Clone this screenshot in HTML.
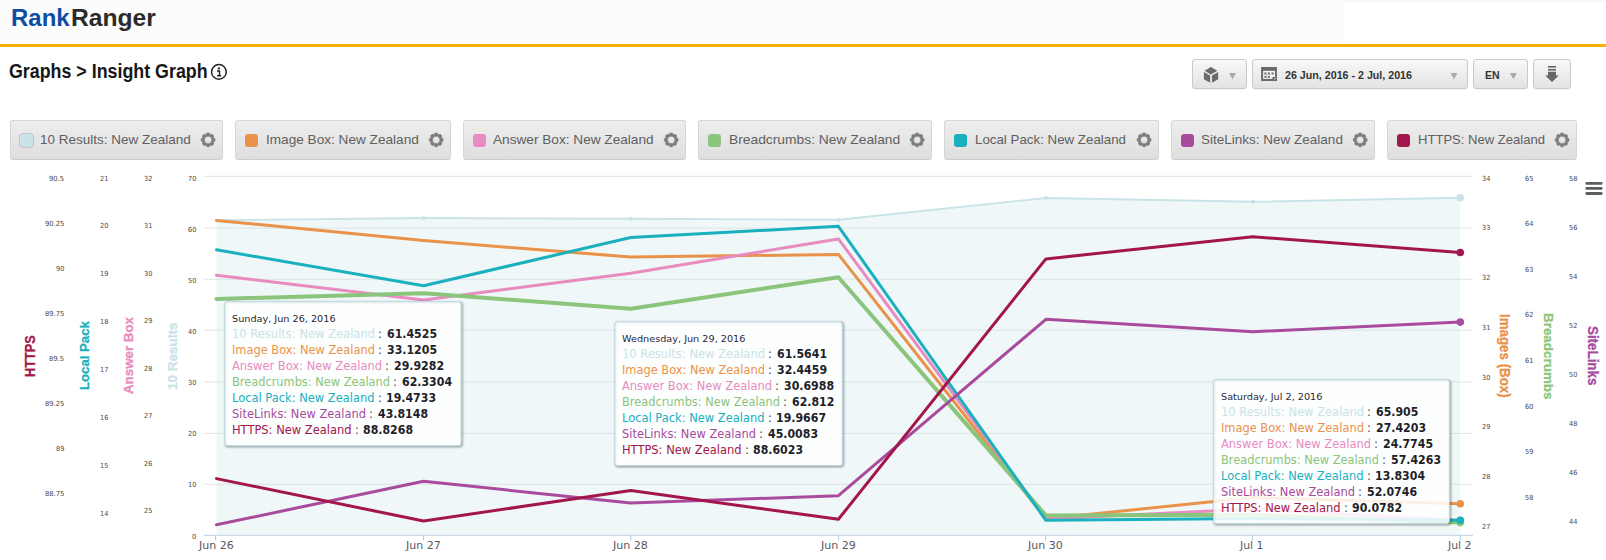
<!DOCTYPE html>
<html lang="en"><head><meta charset="utf-8"><title>Rank Ranger - Insight Graph</title>
<style>
html,body{margin:0;padding:0;background:#fff;}
body{width:1606px;height:560px;position:relative;overflow:hidden;font-family:"Liberation Sans",sans-serif;}
.t{position:absolute;white-space:nowrap;line-height:1;transform-origin:0 0;display:block;}
.hdr{position:absolute;left:0;top:0;width:1345px;height:44px;background:#fcfcfc;}
.hdr2{position:absolute;left:1345px;top:0;width:261px;height:44px;background:#fff;border-top:2px solid #f7f7f7;box-sizing:border-box;}
.gold{position:absolute;left:0;top:44px;width:1606px;height:3px;background:#fbb004;}
.btn{position:absolute;box-sizing:border-box;border:1px solid #c9c9c9;border-radius:3px;background:linear-gradient(#f8f8f8,#e3e3e3);box-shadow:0 1px 0 rgba(0,0,0,0.04);}
.lg{position:absolute;box-sizing:border-box;border:1px solid #d6d6d6;border-bottom-color:#cdcdcd;border-radius:3px;background:linear-gradient(#eeeeee,#dedede);top:120px;height:40px;}
.sw{position:absolute;top:12.6px;left:8.7px;width:13.4px;height:13.4px;border-radius:3.2px;box-sizing:border-box;}
svg{position:absolute;left:0;top:0;}
</style></head><body>
<div class="hdr"></div><div class="hdr2"></div><div class="gold"></div>

<div class="btn" style="left:1192px;top:59px;width:55px;height:30px"></div>
<div class="btn" style="left:1252px;top:59px;width:216px;height:30px"></div>
<div class="btn" style="left:1473px;top:59px;width:55px;height:30px"></div>
<div class="btn" style="left:1533px;top:59px;width:38px;height:30px"></div>
<div class="lg" style="left:10.2px;width:212.5px"><span class="sw" style="background:#c9e3e8;box-shadow:0 0 0 0.8px #bdbdbd"></span></div>
<div class="lg" style="left:235.0px;width:215.8px"><span class="sw" style="background:#ea9249"></span></div>
<div class="lg" style="left:463.1px;width:222.7px"><span class="sw" style="background:#e88bc1"></span></div>
<div class="lg" style="left:698.1px;width:233.7px"><span class="sw" style="background:#8bc57b"></span></div>
<div class="lg" style="left:944.1px;width:214.6px"><span class="sw" style="background:#1ab0be"></span></div>
<div class="lg" style="left:1171.1px;width:203.7px"><span class="sw" style="background:#a94b9d"></span></div>
<div class="lg" style="left:1387.1px;width:189.6px"><span class="sw" style="background:#a3164b"></span></div>
<svg width="1606" height="560" viewBox="0 0 1606 560">
<path d="M204 176.3H1473" stroke="#e3e3e3" stroke-width="1" fill="none"/>
<path d="M204 228.1H1473" stroke="#e3e3e3" stroke-width="1" fill="none"/>
<path d="M204 279.3H1473" stroke="#e3e3e3" stroke-width="1" fill="none"/>
<path d="M204 330.2H1473" stroke="#e3e3e3" stroke-width="1" fill="none"/>
<path d="M204 382.0H1473" stroke="#e3e3e3" stroke-width="1" fill="none"/>
<path d="M204 433.4H1473" stroke="#e3e3e3" stroke-width="1" fill="none"/>
<path d="M204 484.3H1473" stroke="#e3e3e3" stroke-width="1" fill="none"/>
<polygon points="216.5,220.3 423.6,218.0 630.8,218.8 838.4,219.7 1045.9,198.0 1252.8,201.8 1460.3,197.8 1460.3,535.3 216.5,535.3" fill="#c9e3e8" fill-opacity="0.30"/>
<path d="M204 535.3H1473" stroke="#c0cfe0" stroke-width="1" fill="none"/>
<path d="M215.6 535.3V540.5" stroke="#bccbdf" stroke-width="1.1" fill="none"/>
<path d="M423.5 535.3V540.5" stroke="#bccbdf" stroke-width="1.1" fill="none"/>
<path d="M630.7 535.3V540.5" stroke="#bccbdf" stroke-width="1.1" fill="none"/>
<path d="M838.5 535.3V540.5" stroke="#bccbdf" stroke-width="1.1" fill="none"/>
<path d="M1045.6 535.3V540.5" stroke="#bccbdf" stroke-width="1.1" fill="none"/>
<path d="M1252.5 535.3V540.5" stroke="#bccbdf" stroke-width="1.1" fill="none"/>
<path d="M1460.3 535.3V540.5" stroke="#bccbdf" stroke-width="1.1" fill="none"/>
<polyline points="216.5,220.3 423.6,218.0 630.8,218.8 838.4,219.7 1045.9,198.0 1252.8,201.8 1460.3,197.8" fill="none" stroke="#c9e3e8" stroke-width="1.9" stroke-linejoin="round" stroke-linecap="round"/>
<circle cx="423.6" cy="218.0" r="2" fill="#c9e3e8"/>
<circle cx="630.8" cy="218.8" r="2" fill="#c9e3e8"/>
<circle cx="838.4" cy="219.7" r="2" fill="#c9e3e8"/>
<circle cx="1045.9" cy="198.0" r="2" fill="#c9e3e8"/>
<circle cx="1252.8" cy="201.8" r="2" fill="#c9e3e8"/>
<circle cx="1460.3" cy="197.8" r="2" fill="#c9e3e8"/>
<circle cx="1460.3" cy="197.8" r="3.8" fill="#c9e3e8"/>
<polyline points="216.5,220.4 423.6,240.5 630.8,257.1 838.4,254.4 1045.9,518.8 1252.8,497.6 1460.3,503.8" fill="none" stroke="#ea9249" stroke-width="3.0" stroke-linejoin="round" stroke-linecap="round"/>
<circle cx="1460.3" cy="503.8" r="3.8" fill="#ea9249"/>
<polyline points="216.5,275.3 423.6,300.0 630.8,273.2 838.4,238.9 1045.9,519.0 1252.8,509.0 1460.3,520.5" fill="none" stroke="#e88bc1" stroke-width="3.0" stroke-linejoin="round" stroke-linecap="round"/>
<circle cx="1460.3" cy="520.5" r="3.8" fill="#e88bc1"/>
<polyline points="216.5,298.9 423.6,293.3 630.8,308.8 838.4,277.2 1045.9,515.4 1252.8,514.8 1460.3,522.6" fill="none" stroke="#8bc57b" stroke-width="4.0" stroke-linejoin="round" stroke-linecap="round"/>
<circle cx="1460.3" cy="522.6" r="3.8" fill="#8bc57b"/>
<polyline points="216.5,249.8 423.6,285.8 630.8,237.5 838.4,226.3 1045.9,520.3 1252.8,518.6 1460.3,520.3" fill="none" stroke="#1ab0be" stroke-width="3.0" stroke-linejoin="round" stroke-linecap="round"/>
<circle cx="1460.3" cy="520.3" r="3.8" fill="#1ab0be"/>
<polyline points="216.5,524.8 423.6,481.3 630.8,503.0 838.4,495.7 1045.9,319.3 1252.8,331.7 1460.3,322.1" fill="none" stroke="#a94b9d" stroke-width="3.0" stroke-linejoin="round" stroke-linecap="round"/>
<circle cx="1460.3" cy="322.1" r="3.8" fill="#a94b9d"/>
<polyline points="216.5,478.6 423.6,521.0 630.8,490.6 838.4,519.3 1045.9,258.9 1252.8,236.7 1460.3,252.5" fill="none" stroke="#a3164b" stroke-width="3.0" stroke-linejoin="round" stroke-linecap="round"/>
<circle cx="1460.3" cy="252.5" r="3.8" fill="#a3164b"/>
</svg>
<svg width="1606" height="560" viewBox="0 0 1606 560">
<rect x="225.9" y="302.8" width="236.1" height="143.8" rx="2.5" fill="none" stroke="#000" stroke-opacity="0.05" stroke-width="5"/>
<rect x="225.9" y="302.8" width="236.1" height="143.8" rx="2.5" fill="none" stroke="#000" stroke-opacity="0.10" stroke-width="3"/>
<rect x="225.9" y="302.8" width="236.1" height="143.8" rx="2.5" fill="none" stroke="#000" stroke-opacity="0.15" stroke-width="1"/>
<rect x="224.9" y="301.8" width="236.1" height="143.8" rx="2.5" fill="#ffffff" fill-opacity="0.86" stroke="#bddbe1" stroke-width="1"/>
<rect x="615.9" y="322.8" width="227.3" height="143.7" rx="2.5" fill="none" stroke="#000" stroke-opacity="0.05" stroke-width="5"/>
<rect x="615.9" y="322.8" width="227.3" height="143.7" rx="2.5" fill="none" stroke="#000" stroke-opacity="0.10" stroke-width="3"/>
<rect x="615.9" y="322.8" width="227.3" height="143.7" rx="2.5" fill="none" stroke="#000" stroke-opacity="0.15" stroke-width="1"/>
<rect x="614.9" y="321.8" width="227.3" height="143.7" rx="2.5" fill="#ffffff" fill-opacity="0.86" stroke="#bddbe1" stroke-width="1"/>
<rect x="1214.6" y="380.8" width="235.7" height="143.6" rx="2.5" fill="none" stroke="#000" stroke-opacity="0.05" stroke-width="5"/>
<rect x="1214.6" y="380.8" width="235.7" height="143.6" rx="2.5" fill="none" stroke="#000" stroke-opacity="0.10" stroke-width="3"/>
<rect x="1214.6" y="380.8" width="235.7" height="143.6" rx="2.5" fill="none" stroke="#000" stroke-opacity="0.15" stroke-width="1"/>
<rect x="1213.6" y="379.8" width="235.7" height="143.6" rx="2.5" fill="#ffffff" fill-opacity="0.86" stroke="#bddbe1" stroke-width="1"/>
</svg>
<svg width="1606" height="560" viewBox="0 0 1606 560">
<circle cx="218.9" cy="71.9" r="7.35" fill="none" stroke="#222" stroke-width="1.45"/>
<path d="M217.0 71h2.5v4.6M217.0 75.7h4.2" stroke="#222" stroke-width="1.45" fill="none"/><circle cx="218.9" cy="68.4" r="1.15" fill="#222"/>
<rect x="1585.4" y="182.0" width="17.2" height="2.8" rx="1.3" fill="#5e5e5e"/>
<rect x="1585.4" y="187.0" width="17.2" height="2.8" rx="1.3" fill="#5e5e5e"/>
<rect x="1585.4" y="192.1" width="17.2" height="2.8" rx="1.3" fill="#5e5e5e"/>
<path d="M1229.0 73.1H1236.0L1232.5 79.2Z" fill="#a9a9a9"/>
<path d="M1450.5 73.1H1457.5L1454.0 79.2Z" fill="#a9a9a9"/>
<path d="M1509.9 73.1H1516.9L1513.4 79.2Z" fill="#a9a9a9"/>
<g fill="#6b6b6b"><path d="M1210.9 67.0L1217.3 70.8 1210.9 74.5 1204.6 70.8z"/><path d="M1203.9 72.0L1210.2 75.6V82.8L1203.9 79.3z"/><path d="M1218.2 72.0L1212.0 75.6V82.8L1218.2 79.3z"/></g>
<g><rect x="1261.1" y="67.0" width="15.8" height="14.0" fill="#6a6a6a"/><rect x="1263.1" y="70.8" width="11.9" height="8.1" fill="#f4f4f4"/><g fill="#7a7a7a"><rect x="1264.4" y="72.4" width="2.2" height="2.2"/><rect x="1267.8" y="72.4" width="2.2" height="2.2"/><rect x="1271.5" y="72.4" width="2.2" height="2.2"/><rect x="1264.4" y="75.8" width="2.2" height="2.2"/><rect x="1267.8" y="75.8" width="2.2" height="2.2"/></g><path d="M1272.4 77.0h4.5v4h-4.5z" fill="#6a6a6a"/><path d="M1273.6 79.6l2-2v0.9l-1.1 1.1z" fill="#f4f4f4"/></g>
<g fill="#666"><rect x="1548" y="66" width="8" height="1.6"/><rect x="1548" y="69" width="8" height="1.6"/><path d="M1548 71.8h8v3.6h2.8L1552 81.9l-6.8-6.5h2.8z"/></g>
<path d="M214.97 138.53L214.97 141.27L213.79 141.46L213.22 142.82L213.92 143.79L211.99 145.72L211.02 145.02L209.66 145.59L209.47 146.77L206.73 146.77L206.54 145.59L205.18 145.02L204.21 145.72L202.28 143.79L202.98 142.82L202.41 141.46L201.23 141.27L201.23 138.53L202.41 138.34L202.98 136.98L202.28 136.01L204.21 134.08L205.18 134.78L206.54 134.21L206.73 133.03L209.47 133.03L209.66 134.21L211.02 134.78L211.99 134.08L213.92 136.01L213.22 136.98L213.79 138.34ZM204.40 139.90a3.70 3.70 0 1 0 7.40 0a3.70 3.70 0 1 0 -7.40 0Z" fill="#7c7c7c" fill-rule="evenodd" stroke="#7c7c7c" stroke-width="0.6" stroke-linejoin="round"/>
<path d="M443.07 138.53L443.07 141.27L441.89 141.46L441.32 142.82L442.02 143.79L440.09 145.72L439.12 145.02L437.76 145.59L437.57 146.77L434.83 146.77L434.64 145.59L433.28 145.02L432.31 145.72L430.38 143.79L431.08 142.82L430.51 141.46L429.33 141.27L429.33 138.53L430.51 138.34L431.08 136.98L430.38 136.01L432.31 134.08L433.28 134.78L434.64 134.21L434.83 133.03L437.57 133.03L437.76 134.21L439.12 134.78L440.09 134.08L442.02 136.01L441.32 136.98L441.89 138.34ZM432.50 139.90a3.70 3.70 0 1 0 7.40 0a3.70 3.70 0 1 0 -7.40 0Z" fill="#7c7c7c" fill-rule="evenodd" stroke="#7c7c7c" stroke-width="0.6" stroke-linejoin="round"/>
<path d="M678.07 138.53L678.07 141.27L676.89 141.46L676.32 142.82L677.02 143.79L675.09 145.72L674.12 145.02L672.76 145.59L672.57 146.77L669.83 146.77L669.64 145.59L668.28 145.02L667.31 145.72L665.38 143.79L666.08 142.82L665.51 141.46L664.33 141.27L664.33 138.53L665.51 138.34L666.08 136.98L665.38 136.01L667.31 134.08L668.28 134.78L669.64 134.21L669.83 133.03L672.57 133.03L672.76 134.21L674.12 134.78L675.09 134.08L677.02 136.01L676.32 136.98L676.89 138.34ZM667.50 139.90a3.70 3.70 0 1 0 7.40 0a3.70 3.70 0 1 0 -7.40 0Z" fill="#7c7c7c" fill-rule="evenodd" stroke="#7c7c7c" stroke-width="0.6" stroke-linejoin="round"/>
<path d="M924.07 138.53L924.07 141.27L922.89 141.46L922.32 142.82L923.02 143.79L921.09 145.72L920.12 145.02L918.76 145.59L918.57 146.77L915.83 146.77L915.64 145.59L914.28 145.02L913.31 145.72L911.38 143.79L912.08 142.82L911.51 141.46L910.33 141.27L910.33 138.53L911.51 138.34L912.08 136.98L911.38 136.01L913.31 134.08L914.28 134.78L915.64 134.21L915.83 133.03L918.57 133.03L918.76 134.21L920.12 134.78L921.09 134.08L923.02 136.01L922.32 136.98L922.89 138.34ZM913.50 139.90a3.70 3.70 0 1 0 7.40 0a3.70 3.70 0 1 0 -7.40 0Z" fill="#7c7c7c" fill-rule="evenodd" stroke="#7c7c7c" stroke-width="0.6" stroke-linejoin="round"/>
<path d="M1150.97 138.53L1150.97 141.27L1149.79 141.46L1149.22 142.82L1149.92 143.79L1147.99 145.72L1147.02 145.02L1145.66 145.59L1145.47 146.77L1142.73 146.77L1142.54 145.59L1141.18 145.02L1140.21 145.72L1138.28 143.79L1138.98 142.82L1138.41 141.46L1137.23 141.27L1137.23 138.53L1138.41 138.34L1138.98 136.98L1138.28 136.01L1140.21 134.08L1141.18 134.78L1142.54 134.21L1142.73 133.03L1145.47 133.03L1145.66 134.21L1147.02 134.78L1147.99 134.08L1149.92 136.01L1149.22 136.98L1149.79 138.34ZM1140.40 139.90a3.70 3.70 0 1 0 7.40 0a3.70 3.70 0 1 0 -7.40 0Z" fill="#7c7c7c" fill-rule="evenodd" stroke="#7c7c7c" stroke-width="0.6" stroke-linejoin="round"/>
<path d="M1367.07 138.53L1367.07 141.27L1365.89 141.46L1365.32 142.82L1366.02 143.79L1364.09 145.72L1363.12 145.02L1361.76 145.59L1361.57 146.77L1358.83 146.77L1358.64 145.59L1357.28 145.02L1356.31 145.72L1354.38 143.79L1355.08 142.82L1354.51 141.46L1353.33 141.27L1353.33 138.53L1354.51 138.34L1355.08 136.98L1354.38 136.01L1356.31 134.08L1357.28 134.78L1358.64 134.21L1358.83 133.03L1361.57 133.03L1361.76 134.21L1363.12 134.78L1364.09 134.08L1366.02 136.01L1365.32 136.98L1365.89 138.34ZM1356.50 139.90a3.70 3.70 0 1 0 7.40 0a3.70 3.70 0 1 0 -7.40 0Z" fill="#7c7c7c" fill-rule="evenodd" stroke="#7c7c7c" stroke-width="0.6" stroke-linejoin="round"/>
<path d="M1568.97 138.53L1568.97 141.27L1567.79 141.46L1567.22 142.82L1567.92 143.79L1565.99 145.72L1565.02 145.02L1563.66 145.59L1563.47 146.77L1560.73 146.77L1560.54 145.59L1559.18 145.02L1558.21 145.72L1556.28 143.79L1556.98 142.82L1556.41 141.46L1555.23 141.27L1555.23 138.53L1556.41 138.34L1556.98 136.98L1556.28 136.01L1558.21 134.08L1559.18 134.78L1560.54 134.21L1560.73 133.03L1563.47 133.03L1563.66 134.21L1565.02 134.78L1565.99 134.08L1567.92 136.01L1567.22 136.98L1567.79 138.34ZM1558.40 139.90a3.70 3.70 0 1 0 7.40 0a3.70 3.70 0 1 0 -7.40 0Z" fill="#7c7c7c" fill-rule="evenodd" stroke="#7c7c7c" stroke-width="0.6" stroke-linejoin="round"/>
</svg>
<span class="t" id="t0" style="font:bold 24.5px/1 'Liberation Sans', sans-serif;color:#0c4da2;left:11.40px;top:6.00px;transform:scaleX(0.9779);">Rank</span>
<span class="t" id="t1" style="font:bold 24.5px/1 'Liberation Sans', sans-serif;color:#2b2b2b;left:70.60px;top:6.00px;transform:scaleX(1.0057);">Ranger</span>
<span class="t" id="t2" style="font:bold 20px/1 'Liberation Sans', sans-serif;color:#161616;left:9.00px;top:61.00px;transform:scaleX(0.8913);">Graphs &gt; Insight Graph</span>
<span class="t" id="t3" style="font:bold 11.4px/1 'Liberation Sans', sans-serif;color:#333;left:1284.60px;top:70.00px;transform:scaleX(0.9372);">26 Jun, 2016 - 2 Jul, 2016</span>
<span class="t" id="t4" style="font:bold 11.8px/1 'Liberation Sans', sans-serif;color:#333;left:1484.70px;top:70.00px;transform:scaleX(0.8969);">EN</span>
<span class="t" id="t5" style="font:normal 13px/1 'Liberation Sans', sans-serif;color:#606060;left:40.10px;top:133.00px;transform:scaleX(1.0375);">10 Results: New Zealand</span>
<span class="t" id="t6" style="font:normal 13px/1 'Liberation Sans', sans-serif;color:#606060;left:265.70px;top:133.00px;transform:scaleX(1.0468);">Image Box: New Zealand</span>
<span class="t" id="t7" style="font:normal 13px/1 'Liberation Sans', sans-serif;color:#606060;left:493.00px;top:133.00px;transform:scaleX(1.0484);">Answer Box: New Zealand</span>
<span class="t" id="t8" style="font:normal 13px/1 'Liberation Sans', sans-serif;color:#606060;left:728.80px;top:133.00px;transform:scaleX(1.0624);">Breadcrumbs: New Zealand</span>
<span class="t" id="t9" style="font:normal 13px/1 'Liberation Sans', sans-serif;color:#606060;left:974.80px;top:133.00px;transform:scaleX(1.0243);">Local Pack: New Zealand</span>
<span class="t" id="t10" style="font:normal 13px/1 'Liberation Sans', sans-serif;color:#606060;left:1201.00px;top:133.00px;transform:scaleX(1.0390);">SiteLinks: New Zealand</span>
<span class="t" id="t11" style="font:normal 13px/1 'Liberation Sans', sans-serif;color:#606060;left:1417.80px;top:133.00px;transform:scaleX(1.0044);">HTTPS: New Zealand</span>
<span class="t" id="t12" style="font:normal 7.0px/1 'DejaVu Sans', 'Liberation Sans', sans-serif;color:#474747;left:49.20px;top:176.00px;transform:scaleX(0.9683);">90.5</span>
<span class="t" id="t13" style="font:normal 7.0px/1 'DejaVu Sans', 'Liberation Sans', sans-serif;color:#474747;left:44.90px;top:221.00px;transform:scaleX(0.9677);">90.25</span>
<span class="t" id="t14" style="font:normal 7.0px/1 'DejaVu Sans', 'Liberation Sans', sans-serif;color:#474747;left:56.00px;top:266.00px;transform:scaleX(0.9303);">90</span>
<span class="t" id="t15" style="font:normal 7.0px/1 'DejaVu Sans', 'Liberation Sans', sans-serif;color:#474747;left:44.90px;top:311.00px;transform:scaleX(0.9677);">89.75</span>
<span class="t" id="t16" style="font:normal 7.0px/1 'DejaVu Sans', 'Liberation Sans', sans-serif;color:#474747;left:49.20px;top:356.00px;transform:scaleX(0.9683);">89.5</span>
<span class="t" id="t17" style="font:normal 7.0px/1 'DejaVu Sans', 'Liberation Sans', sans-serif;color:#474747;left:44.90px;top:401.00px;transform:scaleX(0.9677);">89.25</span>
<span class="t" id="t18" style="font:normal 7.0px/1 'DejaVu Sans', 'Liberation Sans', sans-serif;color:#474747;left:56.00px;top:446.00px;transform:scaleX(0.9303);">89</span>
<span class="t" id="t19" style="font:normal 7.0px/1 'DejaVu Sans', 'Liberation Sans', sans-serif;color:#474747;left:44.90px;top:491.00px;transform:scaleX(0.9677);">88.75</span>
<span class="t" id="t20" style="font:normal 7.0px/1 'DejaVu Sans', 'Liberation Sans', sans-serif;color:#474747;left:99.50px;top:176.00px;transform:scaleX(0.9303);">21</span>
<span class="t" id="t21" style="font:normal 7.0px/1 'DejaVu Sans', 'Liberation Sans', sans-serif;color:#474747;left:99.50px;top:223.00px;transform:scaleX(0.9303);">20</span>
<span class="t" id="t22" style="font:normal 7.0px/1 'DejaVu Sans', 'Liberation Sans', sans-serif;color:#474747;left:99.50px;top:271.00px;transform:scaleX(0.9303);">19</span>
<span class="t" id="t23" style="font:normal 7.0px/1 'DejaVu Sans', 'Liberation Sans', sans-serif;color:#474747;left:99.50px;top:319.00px;transform:scaleX(0.9303);">18</span>
<span class="t" id="t24" style="font:normal 7.0px/1 'DejaVu Sans', 'Liberation Sans', sans-serif;color:#474747;left:99.50px;top:367.00px;transform:scaleX(0.9303);">17</span>
<span class="t" id="t25" style="font:normal 7.0px/1 'DejaVu Sans', 'Liberation Sans', sans-serif;color:#474747;left:99.50px;top:415.00px;transform:scaleX(0.9303);">16</span>
<span class="t" id="t26" style="font:normal 7.0px/1 'DejaVu Sans', 'Liberation Sans', sans-serif;color:#474747;left:99.50px;top:463.00px;transform:scaleX(0.9303);">15</span>
<span class="t" id="t27" style="font:normal 7.0px/1 'DejaVu Sans', 'Liberation Sans', sans-serif;color:#474747;left:99.50px;top:511.00px;transform:scaleX(0.9303);">14</span>
<span class="t" id="t28" style="font:normal 7.0px/1 'DejaVu Sans', 'Liberation Sans', sans-serif;color:#474747;left:144.00px;top:176.00px;transform:scaleX(0.9303);">32</span>
<span class="t" id="t29" style="font:normal 7.0px/1 'DejaVu Sans', 'Liberation Sans', sans-serif;color:#474747;left:144.00px;top:223.00px;transform:scaleX(0.9303);">31</span>
<span class="t" id="t30" style="font:normal 7.0px/1 'DejaVu Sans', 'Liberation Sans', sans-serif;color:#474747;left:144.00px;top:271.00px;transform:scaleX(0.9303);">30</span>
<span class="t" id="t31" style="font:normal 7.0px/1 'DejaVu Sans', 'Liberation Sans', sans-serif;color:#474747;left:144.00px;top:318.00px;transform:scaleX(0.9303);">29</span>
<span class="t" id="t32" style="font:normal 7.0px/1 'DejaVu Sans', 'Liberation Sans', sans-serif;color:#474747;left:144.00px;top:366.00px;transform:scaleX(0.9303);">28</span>
<span class="t" id="t33" style="font:normal 7.0px/1 'DejaVu Sans', 'Liberation Sans', sans-serif;color:#474747;left:144.00px;top:413.00px;transform:scaleX(0.9303);">27</span>
<span class="t" id="t34" style="font:normal 7.0px/1 'DejaVu Sans', 'Liberation Sans', sans-serif;color:#474747;left:144.00px;top:461.00px;transform:scaleX(0.9303);">26</span>
<span class="t" id="t35" style="font:normal 7.0px/1 'DejaVu Sans', 'Liberation Sans', sans-serif;color:#474747;left:144.00px;top:508.00px;transform:scaleX(0.9303);">25</span>
<span class="t" id="t36" style="font:normal 7.0px/1 'DejaVu Sans', 'Liberation Sans', sans-serif;color:#474747;left:187.70px;top:176.00px;transform:scaleX(0.9303);">70</span>
<span class="t" id="t37" style="font:normal 7.0px/1 'DejaVu Sans', 'Liberation Sans', sans-serif;color:#474747;left:187.70px;top:227.00px;transform:scaleX(0.9303);">60</span>
<span class="t" id="t38" style="font:normal 7.0px/1 'DejaVu Sans', 'Liberation Sans', sans-serif;color:#474747;left:187.70px;top:278.00px;transform:scaleX(0.9303);">50</span>
<span class="t" id="t39" style="font:normal 7.0px/1 'DejaVu Sans', 'Liberation Sans', sans-serif;color:#474747;left:187.70px;top:329.00px;transform:scaleX(0.9303);">40</span>
<span class="t" id="t40" style="font:normal 7.0px/1 'DejaVu Sans', 'Liberation Sans', sans-serif;color:#474747;left:187.70px;top:380.00px;transform:scaleX(0.9303);">30</span>
<span class="t" id="t41" style="font:normal 7.0px/1 'DejaVu Sans', 'Liberation Sans', sans-serif;color:#474747;left:187.70px;top:431.00px;transform:scaleX(0.9303);">20</span>
<span class="t" id="t42" style="font:normal 7.0px/1 'DejaVu Sans', 'Liberation Sans', sans-serif;color:#474747;left:187.70px;top:482.00px;transform:scaleX(0.9303);">10</span>
<span class="t" id="t43" style="font:normal 7.0px/1 'DejaVu Sans', 'Liberation Sans', sans-serif;color:#474747;left:191.70px;top:534.00px;transform:scaleX(0.9622);">0</span>
<span class="t" id="t44" style="font:normal 7.0px/1 'DejaVu Sans', 'Liberation Sans', sans-serif;color:#474747;left:1481.70px;top:176.00px;transform:scaleX(0.9303);">34</span>
<span class="t" id="t45" style="font:normal 7.0px/1 'DejaVu Sans', 'Liberation Sans', sans-serif;color:#474747;left:1481.70px;top:225.00px;transform:scaleX(0.9303);">33</span>
<span class="t" id="t46" style="font:normal 7.0px/1 'DejaVu Sans', 'Liberation Sans', sans-serif;color:#474747;left:1481.70px;top:275.00px;transform:scaleX(0.9303);">32</span>
<span class="t" id="t47" style="font:normal 7.0px/1 'DejaVu Sans', 'Liberation Sans', sans-serif;color:#474747;left:1481.70px;top:325.00px;transform:scaleX(0.9303);">31</span>
<span class="t" id="t48" style="font:normal 7.0px/1 'DejaVu Sans', 'Liberation Sans', sans-serif;color:#474747;left:1481.70px;top:375.00px;transform:scaleX(0.9303);">30</span>
<span class="t" id="t49" style="font:normal 7.0px/1 'DejaVu Sans', 'Liberation Sans', sans-serif;color:#474747;left:1481.70px;top:424.00px;transform:scaleX(0.9303);">29</span>
<span class="t" id="t50" style="font:normal 7.0px/1 'DejaVu Sans', 'Liberation Sans', sans-serif;color:#474747;left:1481.70px;top:474.00px;transform:scaleX(0.9303);">28</span>
<span class="t" id="t51" style="font:normal 7.0px/1 'DejaVu Sans', 'Liberation Sans', sans-serif;color:#474747;left:1481.70px;top:524.00px;transform:scaleX(0.9303);">27</span>
<span class="t" id="t52" style="font:normal 7.0px/1 'DejaVu Sans', 'Liberation Sans', sans-serif;color:#474747;left:1525.10px;top:176.00px;transform:scaleX(0.9303);">65</span>
<span class="t" id="t53" style="font:normal 7.0px/1 'DejaVu Sans', 'Liberation Sans', sans-serif;color:#474747;left:1525.10px;top:221.00px;transform:scaleX(0.9303);">64</span>
<span class="t" id="t54" style="font:normal 7.0px/1 'DejaVu Sans', 'Liberation Sans', sans-serif;color:#474747;left:1525.10px;top:267.00px;transform:scaleX(0.9303);">63</span>
<span class="t" id="t55" style="font:normal 7.0px/1 'DejaVu Sans', 'Liberation Sans', sans-serif;color:#474747;left:1525.10px;top:312.00px;transform:scaleX(0.9303);">62</span>
<span class="t" id="t56" style="font:normal 7.0px/1 'DejaVu Sans', 'Liberation Sans', sans-serif;color:#474747;left:1525.10px;top:358.00px;transform:scaleX(0.9303);">61</span>
<span class="t" id="t57" style="font:normal 7.0px/1 'DejaVu Sans', 'Liberation Sans', sans-serif;color:#474747;left:1525.10px;top:404.00px;transform:scaleX(0.9303);">60</span>
<span class="t" id="t58" style="font:normal 7.0px/1 'DejaVu Sans', 'Liberation Sans', sans-serif;color:#474747;left:1525.10px;top:449.00px;transform:scaleX(0.9303);">59</span>
<span class="t" id="t59" style="font:normal 7.0px/1 'DejaVu Sans', 'Liberation Sans', sans-serif;color:#474747;left:1525.10px;top:495.00px;transform:scaleX(0.9303);">58</span>
<span class="t" id="t60" style="font:normal 7.0px/1 'DejaVu Sans', 'Liberation Sans', sans-serif;color:#474747;left:1569.40px;top:176.00px;transform:scaleX(0.9303);">58</span>
<span class="t" id="t61" style="font:normal 7.0px/1 'DejaVu Sans', 'Liberation Sans', sans-serif;color:#474747;left:1569.40px;top:225.00px;transform:scaleX(0.9303);">56</span>
<span class="t" id="t62" style="font:normal 7.0px/1 'DejaVu Sans', 'Liberation Sans', sans-serif;color:#474747;left:1569.40px;top:274.00px;transform:scaleX(0.9303);">54</span>
<span class="t" id="t63" style="font:normal 7.0px/1 'DejaVu Sans', 'Liberation Sans', sans-serif;color:#474747;left:1569.40px;top:323.00px;transform:scaleX(0.9303);">52</span>
<span class="t" id="t64" style="font:normal 7.0px/1 'DejaVu Sans', 'Liberation Sans', sans-serif;color:#474747;left:1569.40px;top:372.00px;transform:scaleX(0.9303);">50</span>
<span class="t" id="t65" style="font:normal 7.0px/1 'DejaVu Sans', 'Liberation Sans', sans-serif;color:#474747;left:1569.40px;top:421.00px;transform:scaleX(0.9303);">48</span>
<span class="t" id="t66" style="font:normal 7.0px/1 'DejaVu Sans', 'Liberation Sans', sans-serif;color:#474747;left:1569.40px;top:470.00px;transform:scaleX(0.9303);">46</span>
<span class="t" id="t67" style="font:normal 7.0px/1 'DejaVu Sans', 'Liberation Sans', sans-serif;color:#474747;left:1569.40px;top:519.00px;transform:scaleX(0.9303);">44</span>
<span class="t" id="t68" style="font:normal 11px/1 'DejaVu Sans Condensed', 'DejaVu Sans', 'Liberation Sans', sans-serif;color:#56595f;left:198.85px;top:540.00px;transform:scaleX(1.1153);">Jun 26</span>
<span class="t" id="t69" style="font:normal 11px/1 'DejaVu Sans Condensed', 'DejaVu Sans', 'Liberation Sans', sans-serif;color:#56595f;left:405.95px;top:540.00px;transform:scaleX(1.1153);">Jun 27</span>
<span class="t" id="t70" style="font:normal 11px/1 'DejaVu Sans Condensed', 'DejaVu Sans', 'Liberation Sans', sans-serif;color:#56595f;left:613.15px;top:540.00px;transform:scaleX(1.1153);">Jun 28</span>
<span class="t" id="t71" style="font:normal 11px/1 'DejaVu Sans Condensed', 'DejaVu Sans', 'Liberation Sans', sans-serif;color:#56595f;left:820.75px;top:540.00px;transform:scaleX(1.1153);">Jun 29</span>
<span class="t" id="t72" style="font:normal 11px/1 'DejaVu Sans Condensed', 'DejaVu Sans', 'Liberation Sans', sans-serif;color:#56595f;left:1028.25px;top:540.00px;transform:scaleX(1.1153);">Jun 30</span>
<span class="t" id="t73" style="font:normal 11px/1 'DejaVu Sans Condensed', 'DejaVu Sans', 'Liberation Sans', sans-serif;color:#56595f;left:1240.00px;top:540.00px;transform:scaleX(1.0986);">Jul 1</span>
<span class="t" id="t74" style="font:normal 11px/1 'DejaVu Sans Condensed', 'DejaVu Sans', 'Liberation Sans', sans-serif;color:#56595f;left:1448.30px;top:540.00px;transform:scaleX(1.0986);">Jul 2</span>
<span class="t" id="t75" style="font:bold 14.0px/1 'Liberation Sans', sans-serif;color:#a3164b;left:23.00px;top:377.00px;transform:rotate(-90deg) scaleX(0.9065);-webkit-text-stroke:0.3px currentColor;">HTTPS</span>
<span class="t" id="t76" style="font:bold 13.6px/1 'Liberation Sans', sans-serif;color:#1ab0be;left:78.30px;top:390.00px;transform:rotate(-90deg) scaleX(0.9686);-webkit-text-stroke:0.3px currentColor;">Local Pack</span>
<span class="t" id="t77" style="font:bold 13.6px/1 'Liberation Sans', sans-serif;color:#e88bc1;left:122.10px;top:394.30px;transform:rotate(-90deg) scaleX(0.9801);-webkit-text-stroke:0.3px currentColor;">Answer Box</span>
<span class="t" id="t78" style="font:bold 13.6px/1 'Liberation Sans', sans-serif;color:#c9e3e8;left:166.30px;top:390.00px;transform:rotate(-90deg) scaleX(0.9909);-webkit-text-stroke:0.3px currentColor;">10 Results</span>
<span class="t" id="t79" style="font:bold 13.8px/1 'Liberation Sans', sans-serif;color:#ea9249;left:1510.80px;top:314.20px;transform:rotate(90deg) scaleX(0.9661);-webkit-text-stroke:0.3px currentColor;">Images (Box)</span>
<span class="t" id="t80" style="font:bold 13.6px/1 'Liberation Sans', sans-serif;color:#8bc57b;left:1555.00px;top:312.80px;transform:rotate(90deg) scaleX(0.9870);-webkit-text-stroke:0.3px currentColor;">Breadcrumbs</span>
<span class="t" id="t81" style="font:bold 13.8px/1 'Liberation Sans', sans-serif;color:#a94b9d;left:1598.80px;top:326.10px;transform:rotate(90deg) scaleX(0.9683);-webkit-text-stroke:0.3px currentColor;">SiteLinks</span>
<span class="t" id="t82" style="font:normal 9.3px/1 'DejaVu Sans', 'Liberation Sans', sans-serif;color:#2a2535;left:232.00px;top:314.00px;transform:scaleX(1.0402);">Sunday, Jun 26, 2016</span>
<span class="t" id="t83" style="font:normal 11.7px/1 'DejaVu Sans', 'Liberation Sans', sans-serif;color:#c9e3e8;left:232.00px;top:329.00px;transform:scaleX(0.9845);">10 Results: New Zealand</span>
<span class="t" id="t84" style="font:normal 11.7px/1 'DejaVu Sans', 'Liberation Sans', sans-serif;color:#4a4a55;left:378.10px;top:329.00px;transform:scaleX(1.0119);">:</span>
<span class="t" id="t85" style="font:bold 11.7px/1 'DejaVu Sans', 'Liberation Sans', sans-serif;color:#1f1f2a;left:386.60px;top:329.00px;transform:scaleX(0.9396);">61.4525</span>
<span class="t" id="t86" style="font:normal 11.7px/1 'DejaVu Sans', 'Liberation Sans', sans-serif;color:#ea9249;left:232.00px;top:345.00px;transform:scaleX(0.9761);">Image Box: New Zealand</span>
<span class="t" id="t87" style="font:normal 11.7px/1 'DejaVu Sans', 'Liberation Sans', sans-serif;color:#4a4a55;left:378.10px;top:345.00px;transform:scaleX(1.0119);">:</span>
<span class="t" id="t88" style="font:bold 11.7px/1 'DejaVu Sans', 'Liberation Sans', sans-serif;color:#1f1f2a;left:386.60px;top:345.00px;transform:scaleX(0.9396);">33.1205</span>
<span class="t" id="t89" style="font:normal 11.7px/1 'DejaVu Sans', 'Liberation Sans', sans-serif;color:#e88bc1;left:232.00px;top:361.00px;transform:scaleX(0.9807);">Answer Box: New Zealand</span>
<span class="t" id="t90" style="font:normal 11.7px/1 'DejaVu Sans', 'Liberation Sans', sans-serif;color:#4a4a55;left:385.10px;top:361.00px;transform:scaleX(1.0119);">:</span>
<span class="t" id="t91" style="font:bold 11.7px/1 'DejaVu Sans', 'Liberation Sans', sans-serif;color:#1f1f2a;left:393.60px;top:361.00px;transform:scaleX(0.9396);">29.9282</span>
<span class="t" id="t92" style="font:normal 11.7px/1 'DejaVu Sans', 'Liberation Sans', sans-serif;color:#8bc57b;left:232.00px;top:377.00px;transform:scaleX(0.9733);">Breadcrumbs: New Zealand</span>
<span class="t" id="t93" style="font:normal 11.7px/1 'DejaVu Sans', 'Liberation Sans', sans-serif;color:#4a4a55;left:393.10px;top:377.00px;transform:scaleX(1.0119);">:</span>
<span class="t" id="t94" style="font:bold 11.7px/1 'DejaVu Sans', 'Liberation Sans', sans-serif;color:#1f1f2a;left:401.60px;top:377.00px;transform:scaleX(0.9396);">62.3304</span>
<span class="t" id="t95" style="font:normal 11.7px/1 'DejaVu Sans', 'Liberation Sans', sans-serif;color:#1ab0be;left:232.00px;top:393.00px;transform:scaleX(0.9804);">Local Pack: New Zealand</span>
<span class="t" id="t96" style="font:normal 11.7px/1 'DejaVu Sans', 'Liberation Sans', sans-serif;color:#4a4a55;left:377.60px;top:393.00px;transform:scaleX(1.0119);">:</span>
<span class="t" id="t97" style="font:bold 11.7px/1 'DejaVu Sans', 'Liberation Sans', sans-serif;color:#1f1f2a;left:386.10px;top:393.00px;transform:scaleX(0.9396);">19.4733</span>
<span class="t" id="t98" style="font:normal 11.7px/1 'DejaVu Sans', 'Liberation Sans', sans-serif;color:#a94b9d;left:232.00px;top:409.00px;transform:scaleX(0.9787);">SiteLinks: New Zealand</span>
<span class="t" id="t99" style="font:normal 11.7px/1 'DejaVu Sans', 'Liberation Sans', sans-serif;color:#4a4a55;left:369.10px;top:409.00px;transform:scaleX(1.0119);">:</span>
<span class="t" id="t100" style="font:bold 11.7px/1 'DejaVu Sans', 'Liberation Sans', sans-serif;color:#1f1f2a;left:377.60px;top:409.00px;transform:scaleX(0.9396);">43.8148</span>
<span class="t" id="t101" style="font:normal 11.7px/1 'DejaVu Sans', 'Liberation Sans', sans-serif;color:#a3164b;left:232.00px;top:425.00px;transform:scaleX(0.9811);">HTTPS: New Zealand</span>
<span class="t" id="t102" style="font:normal 11.7px/1 'DejaVu Sans', 'Liberation Sans', sans-serif;color:#4a4a55;left:354.60px;top:425.00px;transform:scaleX(1.0119);">:</span>
<span class="t" id="t103" style="font:bold 11.7px/1 'DejaVu Sans', 'Liberation Sans', sans-serif;color:#1f1f2a;left:363.10px;top:425.00px;transform:scaleX(0.9396);">88.8268</span>
<span class="t" id="t104" style="font:normal 9.3px/1 'DejaVu Sans', 'Liberation Sans', sans-serif;color:#2a2535;left:622.00px;top:334.00px;transform:scaleX(1.0403);">Wednesday, Jun 29, 2016</span>
<span class="t" id="t105" style="font:normal 11.7px/1 'DejaVu Sans', 'Liberation Sans', sans-serif;color:#c9e3e8;left:622.00px;top:349.00px;transform:scaleX(0.9845);">10 Results: New Zealand</span>
<span class="t" id="t106" style="font:normal 11.7px/1 'DejaVu Sans', 'Liberation Sans', sans-serif;color:#4a4a55;left:768.10px;top:349.00px;transform:scaleX(1.0119);">:</span>
<span class="t" id="t107" style="font:bold 11.7px/1 'DejaVu Sans', 'Liberation Sans', sans-serif;color:#1f1f2a;left:776.60px;top:349.00px;transform:scaleX(0.9396);">61.5641</span>
<span class="t" id="t108" style="font:normal 11.7px/1 'DejaVu Sans', 'Liberation Sans', sans-serif;color:#ea9249;left:622.00px;top:365.00px;transform:scaleX(0.9761);">Image Box: New Zealand</span>
<span class="t" id="t109" style="font:normal 11.7px/1 'DejaVu Sans', 'Liberation Sans', sans-serif;color:#4a4a55;left:768.10px;top:365.00px;transform:scaleX(1.0119);">:</span>
<span class="t" id="t110" style="font:bold 11.7px/1 'DejaVu Sans', 'Liberation Sans', sans-serif;color:#1f1f2a;left:776.60px;top:365.00px;transform:scaleX(0.9396);">32.4459</span>
<span class="t" id="t111" style="font:normal 11.7px/1 'DejaVu Sans', 'Liberation Sans', sans-serif;color:#e88bc1;left:622.00px;top:381.00px;transform:scaleX(0.9807);">Answer Box: New Zealand</span>
<span class="t" id="t112" style="font:normal 11.7px/1 'DejaVu Sans', 'Liberation Sans', sans-serif;color:#4a4a55;left:775.10px;top:381.00px;transform:scaleX(1.0119);">:</span>
<span class="t" id="t113" style="font:bold 11.7px/1 'DejaVu Sans', 'Liberation Sans', sans-serif;color:#1f1f2a;left:783.60px;top:381.00px;transform:scaleX(0.9396);">30.6988</span>
<span class="t" id="t114" style="font:normal 11.7px/1 'DejaVu Sans', 'Liberation Sans', sans-serif;color:#8bc57b;left:622.00px;top:397.00px;transform:scaleX(0.9733);">Breadcrumbs: New Zealand</span>
<span class="t" id="t115" style="font:normal 11.7px/1 'DejaVu Sans', 'Liberation Sans', sans-serif;color:#4a4a55;left:783.10px;top:397.00px;transform:scaleX(1.0119);">:</span>
<span class="t" id="t116" style="font:bold 11.7px/1 'DejaVu Sans', 'Liberation Sans', sans-serif;color:#1f1f2a;left:791.60px;top:397.00px;transform:scaleX(0.9388);">62.812</span>
<span class="t" id="t117" style="font:normal 11.7px/1 'DejaVu Sans', 'Liberation Sans', sans-serif;color:#1ab0be;left:622.00px;top:413.00px;transform:scaleX(0.9804);">Local Pack: New Zealand</span>
<span class="t" id="t118" style="font:normal 11.7px/1 'DejaVu Sans', 'Liberation Sans', sans-serif;color:#4a4a55;left:767.60px;top:413.00px;transform:scaleX(1.0119);">:</span>
<span class="t" id="t119" style="font:bold 11.7px/1 'DejaVu Sans', 'Liberation Sans', sans-serif;color:#1f1f2a;left:776.10px;top:413.00px;transform:scaleX(0.9396);">19.9667</span>
<span class="t" id="t120" style="font:normal 11.7px/1 'DejaVu Sans', 'Liberation Sans', sans-serif;color:#a94b9d;left:622.00px;top:429.00px;transform:scaleX(0.9787);">SiteLinks: New Zealand</span>
<span class="t" id="t121" style="font:normal 11.7px/1 'DejaVu Sans', 'Liberation Sans', sans-serif;color:#4a4a55;left:759.10px;top:429.00px;transform:scaleX(1.0119);">:</span>
<span class="t" id="t122" style="font:bold 11.7px/1 'DejaVu Sans', 'Liberation Sans', sans-serif;color:#1f1f2a;left:767.60px;top:429.00px;transform:scaleX(0.9396);">45.0083</span>
<span class="t" id="t123" style="font:normal 11.7px/1 'DejaVu Sans', 'Liberation Sans', sans-serif;color:#a3164b;left:622.00px;top:445.00px;transform:scaleX(0.9811);">HTTPS: New Zealand</span>
<span class="t" id="t124" style="font:normal 11.7px/1 'DejaVu Sans', 'Liberation Sans', sans-serif;color:#4a4a55;left:744.60px;top:445.00px;transform:scaleX(1.0119);">:</span>
<span class="t" id="t125" style="font:bold 11.7px/1 'DejaVu Sans', 'Liberation Sans', sans-serif;color:#1f1f2a;left:753.10px;top:445.00px;transform:scaleX(0.9396);">88.6023</span>
<span class="t" id="t126" style="font:normal 9.3px/1 'DejaVu Sans', 'Liberation Sans', sans-serif;color:#2a2535;left:1221.00px;top:392.00px;transform:scaleX(1.0403);">Saturday, Jul 2, 2016</span>
<span class="t" id="t127" style="font:normal 11.7px/1 'DejaVu Sans', 'Liberation Sans', sans-serif;color:#c9e3e8;left:1221.00px;top:407.00px;transform:scaleX(0.9845);">10 Results: New Zealand</span>
<span class="t" id="t128" style="font:normal 11.7px/1 'DejaVu Sans', 'Liberation Sans', sans-serif;color:#4a4a55;left:1367.10px;top:407.00px;transform:scaleX(1.0119);">:</span>
<span class="t" id="t129" style="font:bold 11.7px/1 'DejaVu Sans', 'Liberation Sans', sans-serif;color:#1f1f2a;left:1375.60px;top:407.00px;transform:scaleX(0.9388);">65.905</span>
<span class="t" id="t130" style="font:normal 11.7px/1 'DejaVu Sans', 'Liberation Sans', sans-serif;color:#ea9249;left:1221.00px;top:423.00px;transform:scaleX(0.9761);">Image Box: New Zealand</span>
<span class="t" id="t131" style="font:normal 11.7px/1 'DejaVu Sans', 'Liberation Sans', sans-serif;color:#4a4a55;left:1367.10px;top:423.00px;transform:scaleX(1.0119);">:</span>
<span class="t" id="t132" style="font:bold 11.7px/1 'DejaVu Sans', 'Liberation Sans', sans-serif;color:#1f1f2a;left:1375.60px;top:423.00px;transform:scaleX(0.9396);">27.4203</span>
<span class="t" id="t133" style="font:normal 11.7px/1 'DejaVu Sans', 'Liberation Sans', sans-serif;color:#e88bc1;left:1221.00px;top:439.00px;transform:scaleX(0.9807);">Answer Box: New Zealand</span>
<span class="t" id="t134" style="font:normal 11.7px/1 'DejaVu Sans', 'Liberation Sans', sans-serif;color:#4a4a55;left:1374.10px;top:439.00px;transform:scaleX(1.0119);">:</span>
<span class="t" id="t135" style="font:bold 11.7px/1 'DejaVu Sans', 'Liberation Sans', sans-serif;color:#1f1f2a;left:1382.60px;top:439.00px;transform:scaleX(0.9396);">24.7745</span>
<span class="t" id="t136" style="font:normal 11.7px/1 'DejaVu Sans', 'Liberation Sans', sans-serif;color:#8bc57b;left:1221.00px;top:455.00px;transform:scaleX(0.9733);">Breadcrumbs: New Zealand</span>
<span class="t" id="t137" style="font:normal 11.7px/1 'DejaVu Sans', 'Liberation Sans', sans-serif;color:#4a4a55;left:1382.10px;top:455.00px;transform:scaleX(1.0119);">:</span>
<span class="t" id="t138" style="font:bold 11.7px/1 'DejaVu Sans', 'Liberation Sans', sans-serif;color:#1f1f2a;left:1390.60px;top:455.00px;transform:scaleX(0.9396);">57.4263</span>
<span class="t" id="t139" style="font:normal 11.7px/1 'DejaVu Sans', 'Liberation Sans', sans-serif;color:#1ab0be;left:1221.00px;top:471.00px;transform:scaleX(0.9804);">Local Pack: New Zealand</span>
<span class="t" id="t140" style="font:normal 11.7px/1 'DejaVu Sans', 'Liberation Sans', sans-serif;color:#4a4a55;left:1366.60px;top:471.00px;transform:scaleX(1.0119);">:</span>
<span class="t" id="t141" style="font:bold 11.7px/1 'DejaVu Sans', 'Liberation Sans', sans-serif;color:#1f1f2a;left:1375.10px;top:471.00px;transform:scaleX(0.9396);">13.8304</span>
<span class="t" id="t142" style="font:normal 11.7px/1 'DejaVu Sans', 'Liberation Sans', sans-serif;color:#a94b9d;left:1221.00px;top:487.00px;transform:scaleX(0.9787);">SiteLinks: New Zealand</span>
<span class="t" id="t143" style="font:normal 11.7px/1 'DejaVu Sans', 'Liberation Sans', sans-serif;color:#4a4a55;left:1358.10px;top:487.00px;transform:scaleX(1.0119);">:</span>
<span class="t" id="t144" style="font:bold 11.7px/1 'DejaVu Sans', 'Liberation Sans', sans-serif;color:#1f1f2a;left:1366.60px;top:487.00px;transform:scaleX(0.9396);">52.0746</span>
<span class="t" id="t145" style="font:normal 11.7px/1 'DejaVu Sans', 'Liberation Sans', sans-serif;color:#a3164b;left:1221.00px;top:503.00px;transform:scaleX(0.9811);">HTTPS: New Zealand</span>
<span class="t" id="t146" style="font:normal 11.7px/1 'DejaVu Sans', 'Liberation Sans', sans-serif;color:#4a4a55;left:1343.60px;top:503.00px;transform:scaleX(1.0119);">:</span>
<span class="t" id="t147" style="font:bold 11.7px/1 'DejaVu Sans', 'Liberation Sans', sans-serif;color:#1f1f2a;left:1352.10px;top:503.00px;transform:scaleX(0.9396);">90.0782</span>
</body></html>
